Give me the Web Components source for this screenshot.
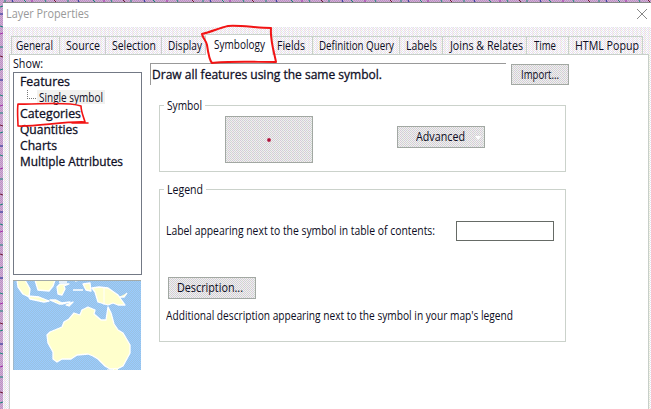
<!DOCTYPE html>
<html lang="en"><head><meta charset="utf-8"><title>Layer Properties</title>
<style>html,body{margin:0;width:651px;height:409px;overflow:hidden;background:#fff}</style></head>
<body><layer-dialog></layer-dialog>
<script>
const define=(name,html,setup)=>customElements.define(name,class extends HTMLElement{
 connectedCallback(){if(this.shadowRoot)return;
  this.attachShadow({mode:'open'}).innerHTML=html;if(setup)setup(this,this.shadowRoot);}
});
/* Crisp 4px dither tile made from a list of 16 cell colours. */
const tile=c=>"url('data:image/svg+xml,"+encodeURIComponent('<svg xmlns="http://www.w3.org/2000/svg" width="4" height="4" shape-rendering="crispEdges">'+Array.from({length:16},(_,i)=>`<rect x="${i%4}" y="${i>>2}" width="1" height="1" fill="${c[(((i%4)+(i>>2))%2)*3+(i*5+(i>>2))%3]}"/>`).join('')+'</svg>')+"')";
const light=tile(['#ffffff','#fff6ec','#f6eeff','#e6e2f0','#dcebdf','#eedde8']);
const grey=tile(['#f2e8f6','#f6eeee','#eaf2f0','#cfd6d0','#d3ccd8','#d6d6d0']);

/* A one-line label whose glyphs are condensed to the width given in w. */
define('fit-label',`<style>:host{display:block;height:16px;flex:none;white-space:nowrap;font:12px/16px "Open Sans","Noto Sans",sans-serif}
:host([heavy]){-webkit-text-stroke:.3px #15152b}
span{display:inline-block;transform-origin:0 50%}</style><span><slot></slot></span>`,(h,s)=>{
 const w=+h.getAttribute('w');h.style.width=w+'px';const p=s.querySelector('span');
 p.style.transform='scaleX('+w/p.getBoundingClientRect().width+')';
});
define('tab-item',`<style>:host{display:block;box-sizing:border-box;height:18px;border-top:1px solid #c9d0c9;border-right:1px solid #c9d0c9;flex:none}
:host([first]){border-left:1px solid #c9d0c9}
:host([selected]){height:21px;background:#fff;align-self:flex-start;position:relative;border-right-color:#ddd}
div{padding-top:1px}:host([selected]) div{padding-top:2px}</style><div><slot></slot></div>`,(h,s)=>{
 h.style.width=h.getAttribute('width')+'px';s.querySelector('div').style.paddingLeft=h.getAttribute('pad')+'px';
});
define('push-button',`<style>:host{display:flex;box-sizing:border-box;border:1px solid #a2a8a3;background:${grey};align-items:center;justify-content:center;height:22px;flex:none}</style><slot></slot>`);
define('group-box',`<style>:host{display:block;box-sizing:border-box;border:1px solid #cbd2cb;width:407px}
.cap{width:fit-content;margin:-8px 0 0 4px;padding:0 3px;background:#fff;height:16px}</style><div class="cap"><slot name="caption"></slot></div><slot></slot>`);
define('tree-row',`<style>:host{display:block;height:16px;padding-left:6px}
:host([child]){display:flex;padding-left:13px}
i{display:none}:host([child]) i{display:block;width:8px;height:8px;border-left:1px dotted #777;border-bottom:1px dotted #777;margin-right:1px}
:host([child]) b{background:#f1f1ef;padding:0 2px;height:14px}b{font-weight:normal;display:block}</style><i></i><b><slot></slot></b>`);
define('map-preview',`<style>:host{display:block;width:128px;height:90px}svg{display:block}</style>
<svg width="128" height="90" viewBox="0 0 128 90"><defs><pattern id="sea" width="2" height="2" patternUnits="userSpaceOnUse"><path d="M0 0h2v2H0z" fill="#99ccff"/><path d="M0 0h1v1H0zM1 1h1v1H1z" fill="#9bc1e2"/></pattern></defs>
<path fill="url(#sea)" d="M0 0h128v90H0z"/><g fill="#ffffcc" stroke="#fff" stroke-width="1.3" stroke-linejoin="round">
<path d="M4 0H12L17 9 16 17 10 14 5 7ZM22 0H42L40 6 36 11 25 10ZM15 16 26 17 36 21 31 22 17 19ZM37 20H43L49 23 57 22 50 24 46 24ZM53 25 60 22 56 26ZM44 7 47 4H56L51 6 52 9 49 15 45 14ZM46 2H54M60 10H70M62 1 66 0M70 4 77 3 78 11 73 10ZM79 8 86 7 95 8 105 15 112 25 105 25 100 23 95 25 85 22 82 12ZM106 17H111L114 13"/>
<path d="M34 55 37 52 49 47 51 42 56 39 61 33 67 35 69 30 75 27 82 30 81 34 88 40 93 40 95 27 98 33 101 44 105 50 110 53 117 65 117 73 110 86 104 89H97L92 86 85 79 80 76 75 74 64 75 58 79 49 79 44 82 40 79V72L35 63Z"/></g>
<path d="M91 8v17" stroke="#fff"/><path d="M94 90h6l2-2 3 2" fill="#ffc" stroke="#fff"/><path d="M0 90V.5H128" fill="none" stroke="#a3aaa8"/></svg>`);
define('red-markup',`<style>:host{position:absolute;inset:0;pointer-events:none}</style><svg width="651" height="409" fill="none" stroke="#f21414" stroke-width="2" stroke-linecap="round" stroke-linejoin="round">
<path d="M271 28C256 28 241 25 228 26C219 28 211 32 202 34C203 39 206 40 207 45C208 52 210 61 212 63C225 61 253 62 276 62C274 52 270 39 271 29"/><path stroke-width="1.6" d="M18 104C36 105 65 101 81 106C81 112 84 118 85 122C66 121 34 127 18 126C18 121 17 110 18 104M72 123 88 123"/></svg>`);
define('map-edge',`<style>:host{display:block;overflow:hidden;background:repeating-conic-gradient(#d6a9d5 0 25%,#b797c4 0 50%) 0 0/2px 2px}svg{display:block}</style><svg width="651" height="409"></svg>`,(h,s)=>{
 const v=h.hasAttribute('vertical');let o='';
 for(let i=5,k=0;i<(v?409:651);i+=7+(k*5)%9,k++){const c=['#178678','#172794','#178678','#a12aa8','#178678','#701933'][k%6];o+=v?`<path d="M0 ${i}l3 ${k%3-1}" stroke="${c}"/>`:`<path d="M${i} 0l${k%3} 2" stroke="${c}"/>`;}
 s.querySelector('svg').innerHTML=o;
});
define('layer-dialog',`<style>
:host{display:grid;grid-template:2px 407px / 3px 648px;width:651px;height:409px;position:relative;color:#0c0c22}
.top{grid-column:1/3}.win{background:${light};min-width:0}
.title{display:flex;height:24px;background:#fff;border-top:1px solid #888;justify-content:space-between;color:#999;padding:0 3px;align-items:center}
.title fit-label{margin-top:-2px}.title svg{margin-top:-2px}
.tabs{display:flex;height:20px;margin:7px 0 0 8px;align-items:flex-end;position:relative}
.page{display:grid;grid-template-columns:137px 1fr;margin-left:6px;width:638px;height:354px;background:#fff;border:1px solid #c8cfc9}
.left{padding:2px 0 0 3px}.left>fit-label{margin-top:-1px;margin-bottom:1px}.list{box-sizing:border-box;width:129px;height:203px;border:1px solid #737985;margin:-1px 0 5px;padding-top:1px}
.right{padding-top:8px}.row{display:flex;gap:5px;align-items:flex-start}
.query{box-sizing:border-box;width:356px;height:22px;border:1px solid #999;border-right:0;border-bottom:0;padding:3px 0 0 1px;margin-left:3px}
group-box{margin-left:12px}.sym{height:67px;margin-top:20px}.leg{height:153px;margin-top:17px}
.controls{display:flex;margin:2px 0 0 65px;align-items:flex-start}.swatch{width:88px;height:47px}.adv{width:88px;margin:10px 0 0 84px}.adv fit-label{margin-left:6px}.adv svg{margin:2px -8px 0 10px}
.field{display:flex;align-items:center;margin:23px 0 0 6px;gap:21px}.input{box-sizing:border-box;width:98px;height:20px;border:1px solid #666b66}
.desc{width:88px;margin:36px 0 9px 8px;padding-right:4px}
</style>
<map-edge class="top"></map-edge><map-edge vertical></map-edge><div class="win">
<div class="title"><fit-label w="83">Layer Properties</fit-label><svg width="12" height="12" stroke="#888" fill="none"><path d="m1 1 10 10M11 1 1 11"/></svg></div>
<div class="tabs"><tab-item first width="49" pad="4"><fit-label w="37">General</fit-label></tab-item><tab-item width="46" pad="6"><fit-label w="34">Source</fit-label></tab-item><tab-item width="56" pad="6"><fit-label w="44">Selection</fit-label></tab-item><tab-item width="44" pad="6"><fit-label w="34">Display</fit-label></tab-item><tab-item selected width="67" pad="8"><fit-label w="51">Symbology</fit-label></tab-item><tab-item width="40" pad="4"><fit-label w="28">Fields</fit-label></tab-item><tab-item width="87" pad="6"><fit-label w="75">Definition Query</fit-label></tab-item><tab-item width="43" pad="6"><fit-label w="31">Labels</fit-label></tab-item><tab-item width="84" pad="7"><fit-label w="73">Joins &amp; Relates</fit-label></tab-item><tab-item width="42" pad="7"><fit-label w="22">Time</fit-label></tab-item><tab-item width="74" pad="6"><fit-label w="64">HTML Popup</fit-label></tab-item></div>
<div class="page"><div class="left"><fit-label w="30">Show:</fit-label><div class="list">
<tree-row><fit-label heavy w="50">Features</fit-label></tree-row><tree-row child><fit-label w="64">Single symbol</fit-label></tree-row><tree-row><fit-label heavy w="61">Categories</fit-label></tree-row><tree-row><fit-label heavy w="58">Quantities</fit-label></tree-row><tree-row><fit-label heavy w="37">Charts</fit-label></tree-row><tree-row><fit-label heavy w="103">Multiple Attributes</fit-label></tree-row></div><map-preview></map-preview></div>
<div class="right"><div class="row"><div class="query"><fit-label heavy w="230">Draw all features using the same symbol.</fit-label></div><push-button style="width:58px;margin-top:1px;height:21px"><fit-label w="38">Import...</fit-label></push-button></div>
<group-box class="sym"><fit-label slot="caption" w="35">Symbol</fit-label><div class="controls"><push-button class="swatch"><svg width="6" height="6"><circle cx="3" cy="3" r="2.2" fill="#aa1038" stroke="#fff" stroke-width=".5"/></svg></push-button><push-button class="adv"><fit-label w="49">Advanced</fit-label><svg width="6" height="4"><path d="M0 0h6L3 4z" fill="#fff"/></svg></push-button></div></group-box>
<group-box class="leg"><fit-label slot="caption" w="36">Legend</fit-label><div class="field"><fit-label w="269">Label appearing next to the symbol in table of contents:</fit-label><div class="input"></div></div><push-button class="desc"><fit-label w="66">Description...</fit-label></push-button><fit-label style="margin-left:6px" w="347">Additional description appearing next to the symbol in your map's legend</fit-label></group-box>
</div></div></div><red-markup></red-markup>`);
</script></body></html>
